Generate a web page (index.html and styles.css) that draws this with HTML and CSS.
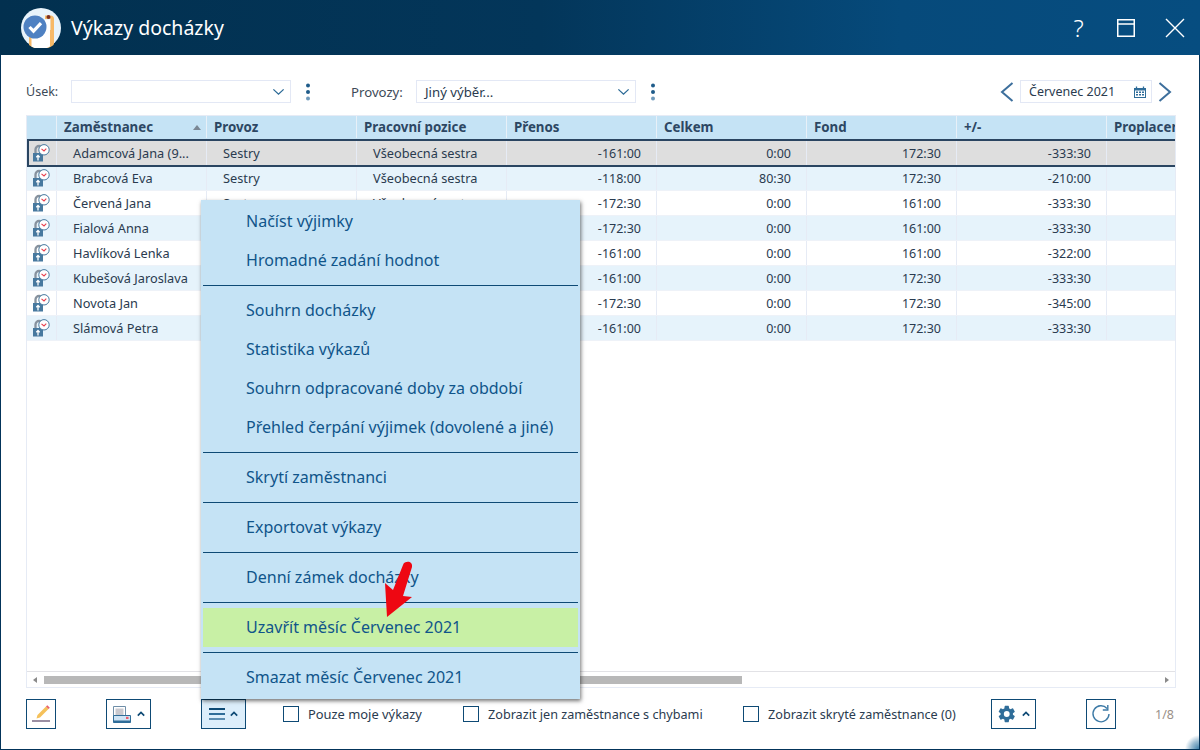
FILE: index.html
```html
<!DOCTYPE html>
<html lang="cs">
<head>
<meta charset="utf-8">
<title>Výkazy docházky</title>
<link rel="stylesheet" href="styles.css">
</head>
<body>
<svg class="defs" width="0" height="0" aria-hidden="true">
  <symbol id="lockclock" viewBox="0 0 18 18">
    <path d="M3.500 9V5.500a3.500 3.500 0 0 1 7 0V9" fill="none" stroke="#87929e" stroke-width="2.300"/>
    <rect x="1" y="9" width="10" height="8.500" fill="#47799f"/>
    <path d="M6 11.500v5M4.300 13.200 6 11.500l1.700 1.700" fill="none" stroke="#fff" stroke-width="1.300"/>
    <circle cx="12" cy="5.800" r="5.200" fill="#fff" stroke="#47799f" stroke-width="1"/>
    <path d="M9.500 4.800 12 7l2.300-2.400" fill="none" stroke="#e8414f" stroke-width="1.100"/>
  </symbol>
  <symbol id="chev" viewBox="0 0 14 8">
    <path d="M1.500 1.200 7 6.400l5.500-5.200" fill="none" stroke="#2b6a96" stroke-width="1.400"/>
  </symbol>
  <symbol id="kebab" viewBox="0 0 6 18">
    <circle cx="3" cy="2.600" r="2" fill="#1f5c8a"/>
    <circle cx="3" cy="9" r="2" fill="#1f5c8a"/>
    <circle cx="3" cy="15.400" r="2" fill="#6f9abb"/>
  </symbol>
  <symbol id="caret" viewBox="0 0 8 6">
    <path d="M.8 4.600 4 1.400l3.200 3.200" fill="none" stroke="#0e4a75" stroke-width="1.700"/>
  </symbol>
</svg>

<div class="window">
  <header class="titlebar">
    <svg class="logo" viewBox="0 0 40 40" aria-hidden="true">
      <circle cx="20" cy="20" r="20" fill="#e8f3fb"/>
      <path d="M8 22h24.500v15a20 20 0 0 1-24.500 0z" fill="#f7b968"/>
      <path d="M10.500 12H29v26.600a20 20 0 0 1-18.500 0z" fill="#fff"/>
      <path d="M24 7.500h5.500a3.500 3.500 0 0 1 3.500 3.500v25l-3.500 2.500V11H24z" fill="#f7b968"/>
      <circle cx="27.500" cy="9" r="2" fill="#7a2f22"/>
      <circle cx="14" cy="19" r="11.500" fill="#4f81c2"/>
      <path d="M8.500 19l4 4.200 7.500-8" fill="none" stroke="#fff" stroke-width="3.200"/>
    </svg>
    <h1 class="title">Výkazy docházky</h1>
    <div class="winctl">
      <span class="help">?</span>
      <svg class="wicon" viewBox="0 0 18 18" aria-hidden="true"><path d="M.75 .75h16.500v16.500H.75zM.75 5h16.500" fill="none" stroke="#fff" stroke-width="1.500"/></svg>
      <svg class="wicon wicon-x" viewBox="0 0 20 20" aria-hidden="true"><path d="M1 1l18 18M19 1 1 19" fill="none" stroke="#fff" stroke-width="1.400"/></svg>
    </div>
  </header>

  <main class="content">
    <div class="filters">
      <label class="flabel flabel-usek">Úsek:</label>
      <div class="select"><span></span><svg class="chev"><use href="#chev"/></svg></div>
      <svg class="kebab"><use href="#kebab"/></svg>
      <label class="flabel flabel-prov">Provozy:</label>
      <div class="select select-prov"><span>Jiný výběr...</span><svg class="chev"><use href="#chev"/></svg></div>
      <svg class="kebab"><use href="#kebab"/></svg>
      <div class="period">
        <svg class="nav" viewBox="0 0 14 20" aria-hidden="true"><path d="M12.500 1 2 10l10.500 9" fill="none" stroke="#3d6f9c" stroke-width="2"/></svg>
        <div class="date"><span>Červenec 2021</span>
          <svg class="cal" viewBox="0 0 12 12" aria-hidden="true"><path d="M0 2h12v10H0z" fill="#2f6d99"/><path d="M2.500 .5v2M9.500 .5v2" stroke="#2f6d99" stroke-width="1.300"/><path d="M1 4.500h10V11H1z" fill="#fff"/><path d="M2 5.500h2v1.500H2zM5 5.500h2v1.500H5zM8 5.500h2v1.500H8zM2 8h2v1.500H2zM5 8h2v1.500H5zM8 8h2v1.500H8z" fill="#2f6d99"/></svg>
        </div>
        <svg class="nav" viewBox="0 0 14 20" aria-hidden="true"><path d="M1.500 1 12 10 1.500 19" fill="none" stroke="#3d6f9c" stroke-width="2"/></svg>
      </div>
    </div>

    <section class="grid">
      <div class="gridbody">
        <div class="row head">
          <div class="c c0"></div>
          <div class="c c1">Zaměstnanec<i class="sort"></i></div>
          <div class="c">Provoz</div>
          <div class="c">Pracovní pozice</div>
          <div class="c">Přenos</div>
          <div class="c">Celkem</div>
          <div class="c">Fond</div>
          <div class="c">+/-</div>
          <div class="c clast">Proplacené</div>
        </div>
        <div class="row sel">
          <div class="c c0"><svg class="rowicon"><use href="#lockclock"/></svg></div>
          <div class="c t">Adamcová Jana (9...</div><div class="c t">Sestry</div><div class="c t">Všeobecná sestra</div>
          <div class="c n">-161:00</div><div class="c n">0:00</div><div class="c n">172:30</div><div class="c n">-333:30</div><div class="c clast"></div>
        </div>
        <div class="row alt">
          <div class="c c0"><svg class="rowicon"><use href="#lockclock"/></svg></div>
          <div class="c t">Brabcová Eva</div><div class="c t">Sestry</div><div class="c t">Všeobecná sestra</div>
          <div class="c n">-118:00</div><div class="c n">80:30</div><div class="c n">172:30</div><div class="c n">-210:00</div><div class="c clast"></div>
        </div>
        <div class="row">
          <div class="c c0"><svg class="rowicon"><use href="#lockclock"/></svg></div>
          <div class="c t">Červená Jana</div><div class="c t">Sestry</div><div class="c t">Všeobecná sestra</div>
          <div class="c n">-172:30</div><div class="c n">0:00</div><div class="c n">161:00</div><div class="c n">-333:30</div><div class="c clast"></div>
        </div>
        <div class="row alt">
          <div class="c c0"><svg class="rowicon"><use href="#lockclock"/></svg></div>
          <div class="c t">Fialová Anna</div><div class="c t">Sestry</div><div class="c t">Všeobecná sestra</div>
          <div class="c n">-172:30</div><div class="c n">0:00</div><div class="c n">161:00</div><div class="c n">-333:30</div><div class="c clast"></div>
        </div>
        <div class="row">
          <div class="c c0"><svg class="rowicon"><use href="#lockclock"/></svg></div>
          <div class="c t">Havlíková Lenka</div><div class="c t">Sestry</div><div class="c t">Všeobecná sestra</div>
          <div class="c n">-161:00</div><div class="c n">0:00</div><div class="c n">161:00</div><div class="c n">-322:00</div><div class="c clast"></div>
        </div>
        <div class="row alt">
          <div class="c c0"><svg class="rowicon"><use href="#lockclock"/></svg></div>
          <div class="c t">Kubešová Jaroslava</div><div class="c t">Sestry</div><div class="c t">Všeobecná sestra</div>
          <div class="c n">-161:00</div><div class="c n">0:00</div><div class="c n">172:30</div><div class="c n">-333:30</div><div class="c clast"></div>
        </div>
        <div class="row">
          <div class="c c0"><svg class="rowicon"><use href="#lockclock"/></svg></div>
          <div class="c t">Novota Jan</div><div class="c t">Sestry</div><div class="c t">Všeobecná sestra</div>
          <div class="c n">-172:30</div><div class="c n">0:00</div><div class="c n">172:30</div><div class="c n">-345:00</div><div class="c clast"></div>
        </div>
        <div class="row alt">
          <div class="c c0"><svg class="rowicon"><use href="#lockclock"/></svg></div>
          <div class="c t">Slámová Petra</div><div class="c t">Sestry</div><div class="c t">Všeobecná sestra</div>
          <div class="c n">-161:00</div><div class="c n">0:00</div><div class="c n">172:30</div><div class="c n">-333:30</div><div class="c clast"></div>
        </div>
      </div>
      <div class="hscroll">
        <i class="arrow arrow-l"></i>
        <div class="track"><div class="thumb"></div></div>
        <i class="arrow arrow-r"></i>
      </div>
    </section>

    <footer class="toolbar">
      <button class="tb tb-narrow tb-edit" type="button">
        <svg viewBox="0 0 20 20" aria-hidden="true"><path d="M5.500 14.500 6.500 11 15 2.500l2.500 2.500L9 13.500z" fill="#f5c15a"/><path d="M15 2.500l1.300-1.300 2.500 2.500L17.500 5z" fill="#e9606a"/><path d="M1 17h18" stroke="#9b8fa3" stroke-width="2"/></svg>
      </button>
      <button class="tb tb-wide tb-print" type="button">
        <svg class="pr" viewBox="0 0 20 20" aria-hidden="true"><path d="M1.500 2.500h12v9h-12z" fill="#fff" stroke="#6f8ea8"/><path d="M3.500 4.500h8V11h-8z" fill="#c9c9cf"/><path d="M1.500 11.500h17v7h-17z" fill="#cfe4f5" stroke="#2f6d99"/><path d="M1.500 16.500h17v2h-17z" fill="#2f6d99"/><rect x="14" y="12.800" width="2.500" height="2.200" fill="#ee5a6a"/></svg>
        <svg class="caret"><use href="#caret"/></svg>
      </button>
      <button class="tb tb-wide tb-menu" type="button">
        <svg class="bars" viewBox="0 0 16 12" aria-hidden="true"><path d="M0 1h16" stroke="#0e4a75" stroke-width="2"/><path d="M0 6h16" stroke="#2f6d99" stroke-width="2"/><path d="M0 11h16" stroke="#5c8db1" stroke-width="2"/></svg>
        <svg class="caret"><use href="#caret"/></svg>
      </button>
      <label class="check check-1"><i class="box"></i>Pouze moje výkazy</label>
      <label class="check check-2"><i class="box"></i>Zobrazit jen zaměstnance s chybami</label>
      <label class="check check-3"><i class="box"></i>Zobrazit skryté zaměstnance (0)</label>
      <button class="tb tb-wide tb-gear" type="button">
        <svg class="gear" viewBox="0 0 24 24" aria-hidden="true"><path d="M19.100 12.900a7.300 7.300 0 0 0 0-1.800l2.100-1.600a.5.5 0 0 0 .1-.6l-2-3.500a.5.5 0 0 0-.6-.2l-2.500 1a7.300 7.300 0 0 0-1.600-.9L14.200 2.600a.5.5 0 0 0-.5-.4H9.700a.5.5 0 0 0-.5.4l-.4 2.700a7.300 7.300 0 0 0-1.600.9l-2.500-1a.5.5 0 0 0-.6.2l-2 3.500a.5.5 0 0 0 .1.600l2.100 1.600a7.300 7.300 0 0 0 0 1.800l-2.100 1.600a.5.5 0 0 0-.1.600l2 3.500a.5.5 0 0 0 .6.2l2.500-1a7.300 7.300 0 0 0 1.600.9l.4 2.700a.5.5 0 0 0 .5.4h4a.5.5 0 0 0 .5-.4l.4-2.700a7.300 7.300 0 0 0 1.600-.9l2.500 1a.5.5 0 0 0 .6-.2l2-3.500a.5.5 0 0 0-.1-.6zM11.700 15.500a3.500 3.500 0 1 1 0-7 3.500 3.500 0 0 1 0 7z" fill="#2f6d99"/></svg>
        <svg class="caret"><use href="#caret"/></svg>
      </button>
      <button class="tb tb-narrow tb-refresh" type="button">
        <svg viewBox="0 0 20 20" aria-hidden="true"><path d="M16 4.500A8 8 0 1 0 18 10" fill="none" stroke="#3d7aa6" stroke-width="1.400"/><path d="M16.800 1v5h-5" fill="none" stroke="#3d7aa6" stroke-width="1.400"/></svg>
      </button>
      <span class="pager">1/8</span>
    </footer>
  </main>

  <nav class="menu">
    <a class="mi">Načíst výjimky</a>
    <a class="mi">Hromadné zadání hodnot</a>
    <hr class="sep">
    <a class="mi">Souhrn docházky</a>
    <a class="mi">Statistika výkazů</a>
    <a class="mi">Souhrn odpracované doby za období</a>
    <a class="mi">Přehled čerpání výjimek (dovolené a jiné)</a>
    <hr class="sep">
    <a class="mi">Skrytí zaměstnanci</a>
    <hr class="sep">
    <a class="mi">Exportovat výkazy</a>
    <hr class="sep">
    <a class="mi">Denní zámek docházky</a>
    <hr class="sep">
    <a class="mi mi-hl">Uzavřít měsíc Červenec 2021</a>
    <hr class="sep">
    <a class="mi">Smazat měsíc Červenec 2021</a>
  </nav>

  <svg class="redarrow" viewBox="0 0 40 70" aria-hidden="true">
    <path d="M21 7C22 3 31 2 30 9L21 38l9 1L5 59 3 25l8 7z" fill="#ee0712"/>
  </svg>
</div>
</body>
</html>
```

FILE: styles.css
```css
* { box-sizing: border-box; }
html, body { margin: 0; height: 100%; }
body {
  font-family: "Noto Sans", "Open Sans", sans-serif;
  font-size: 12px;
  color: #2a3b4f;
  background: #fff;
  overflow: hidden;
}
.defs { position: absolute; }

.window {
  position: relative;
  width: 1200px;
  height: 750px;
  display: flex;
  flex-direction: column;
  border: 1px solid #03345a;
  border-top: 0;
  background: #fff;
}
.window::after {
  content: "";
  position: absolute;
  right: 0;
  bottom: 0;
  width: 14px;
  height: 14px;
  background: radial-gradient(circle at 100% 100%, #3d7ea8 0, rgba(61,126,168,.5) 8px, rgba(61,126,168,0) 14px);
  pointer-events: none;
}

.titlebar {
  flex: none;
  height: 55px;
  margin: 0 -1px;
  display: flex;
  align-items: center;
  padding-left: 21px;
  background: linear-gradient(90deg, #02304f 0%, #03365a 45%, #064a7b 75%, #064d80 100%);
  color: #fff;
}
.logo { width: 40px; height: 40px; flex: none; }
.title { margin: 0 0 0 10px; font-size: 19.500px; font-weight: 400; line-height: 28px; color: #fff; }
.winctl { margin-left: auto; display: flex; align-items: center; padding-right: 15px; }
.help { font-size: 24px; line-height: 30px; width: 15px; text-align: center; font-weight: 300; margin-right: 31px; margin-left: -1px; }
.wicon { width: 18px; height: 18px; margin-right: 30px; }
.wicon-x { width: 20px; height: 20px; margin-right: 0; }

.content {
  flex: 1;
  min-height: 0;
  display: flex;
  flex-direction: column;
  padding: 25px 23px 20px 25px;
}

.filters { display: flex; align-items: center; height: 23px; flex: none; }
.flabel { font-size: 12.500px; color: #3d4a58; }
.flabel-usek { width: 45px; }
.flabel-prov { width: 65px; margin-left: 40px; font-size: 13.200px; }
.select {
  width: 220px;
  height: 23px;
  border: 1px solid #e3e8f5;
  display: flex;
  align-items: center;
  justify-content: space-between;
  padding: 0 5px 0 8px;
  font-size: 12.500px;
}
.select-prov { font-size: 13.200px; }
.chev { width: 13px; height: 8px; }
.kebab { width: 6px; height: 18px; margin-left: 14px; }
.period { margin-left: auto; display: flex; align-items: center; margin-right: 4px; }
.nav { width: 14px; height: 20px; }
.date {
  width: 132px;
  height: 23px;
  margin: 0 6px 0 6px;
  border: 1px solid #e3e8f5;
  display: flex;
  align-items: center;
  justify-content: space-between;
  padding: 0 5px 0 8px;
  font-size: 12.500px;
}
.cal { width: 12px; height: 12px; }

.grid {
  margin-top: 12px;
  flex: 1;
  min-height: 0;
  display: flex;
  flex-direction: column;
  border: 1px solid #e6ebf5;
  width: 1150px;
}
.gridbody { flex: 1; min-height: 0; overflow: hidden; }
.row {
  position: relative;
  display: grid;
  grid-template-columns: 30px repeat(7, 150px) 1fr;
  height: 25px;
  background: #fff;
  border-bottom: 1px solid #eef2f8;
}
.row.alt { background: #e6f3fb; }
.row.head {
  height: 25px;
  padding-bottom: 3px;
  background: #c5e3f5;
  color: #2d4763;
  border-bottom: 0;
}
.row.sel { background: #dedede; border-bottom: 0; padding-bottom: 1px; z-index: 1; }
.row.sel::after {
  content: "";
  position: absolute;
  left: 0;
  right: 0;
  top: -2px;
  bottom: -1px;
  border: solid #2a4561;
  border-width: 2px 0 2px 2px;
  pointer-events: none;
}
.c {
  border-right: 1px solid #e6ebf5;
  display: flex;
  align-items: center;
  padding: 0 6px;
  min-width: 0;
  overflow: hidden;
  white-space: nowrap;
  font-size: 12.500px;
}
.head .c { padding-left: 7px; border-right-color: #e8f0f8; position: relative; font-size: 13.300px; font-weight: 700; }
.c0 { justify-content: center; padding: 0; }
.c.t { padding-left: 16px; font-size: 12.750px; }
.c.n { justify-content: flex-end; padding-right: 15px; }
.clast { border-right: 0; }
.rowicon { width: 18px; height: 18px; margin-left: -1px; }
.sort {
  position: absolute;
  right: 5px;
  top: 9px;
  border: 4.500px solid transparent;
  border-top: 0;
  border-bottom: 5px solid #7b8794;
}

.hscroll {
  flex: none;
  height: 16px;
  border-top: 1px solid #e2e2e6;
  display: flex;
  align-items: center;
  padding: 0 6px;
}
.arrow { width: 0; height: 0; border: 3px solid transparent; }
.arrow-l { border-right: 4px solid #8a8a8a; border-left: 0; }
.arrow-r { border-left: 4px solid #8a8a8a; border-right: 0; }
.track { flex: 1; height: 8px; padding-left: 7px; }
.thumb { width: 698px; height: 8px; background: #b8b8b8; }

.toolbar {
  flex: none;
  margin-top: 11px;
  height: 30px;
  display: flex;
  align-items: center;
  width: 1150px;
}
.tb {
  height: 30px;
  border: 1px solid #0e4a75;
  background: #fff;
  padding: 0;
  display: flex;
  align-items: center;
  justify-content: center;
  flex: none;
}
.tb-narrow { width: 30px; }
.tb-wide { width: 45px; gap: 5px; }
.tb-narrow svg { width: 20px; height: 20px; }
.tb-print { margin-left: 50px; }
.tb-menu { margin-left: 50px; background: #dceefb; }
.pr { width: 20px; height: 20px; }
.bars { width: 16px; height: 12px; }
.gear { width: 20px; height: 20px; }
.caret { width: 8px; height: 6px; }
.check { display: flex; align-items: center; font-size: 12.650px; flex: none; color: #2a3b4f; white-space: nowrap; }
.box { width: 16px; height: 16px; border: 1px solid #0e4a75; margin-right: 9px; flex: none; }
.check-1 { margin-left: 37px; width: 180px; font-size: 12.900px; }
.check-2 { width: 280px; }
.check-3 { width: 248px; }
.tb-refresh { margin-left: 50px; }
.pager { margin-left: auto; font-size: 12.500px; color: #9a9088; padding-right: 2px; }

.menu {
  position: absolute;
  left: 200px;
  top: 200px;
  width: 379px;
  height: 499px;
  padding: 2px;
  background: #c5e3f5;
  box-shadow: 1px 2px 4px rgba(0,0,0,.55);
  display: flex;
  flex-direction: column;
}
.mi {
  flex: none;
  height: 39px;
  display: flex;
  align-items: center;
  padding-left: 43px;
  padding-bottom: 1px;
  font-size: 16.050px;
  color: #10558a;
}
.mi-hl { background: #c8f0a5; }
.sep { flex: none; width: 100%; height: 1px; margin: 5px 0; border: 0; background: #0e4a75; }
.redarrow { position: absolute; left: 381px; top: 558px; width: 40px; height: 70px; }
```
